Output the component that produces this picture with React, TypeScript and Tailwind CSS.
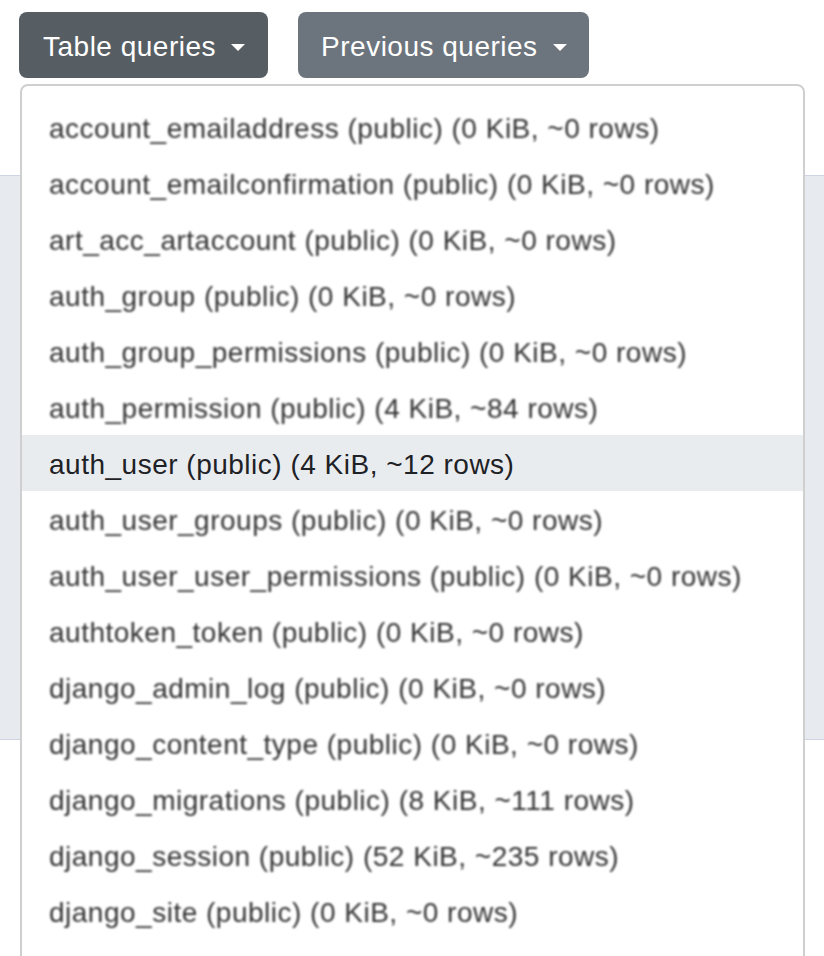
import { useState } from "react";

const tables = [
    "account_emailaddress (public) (0 KiB, ~0 rows)",
    "account_emailconfirmation (public) (0 KiB, ~0 rows)",
    "art_acc_artaccount (public) (0 KiB, ~0 rows)",
    "auth_group (public) (0 KiB, ~0 rows)",
    "auth_group_permissions (public) (0 KiB, ~0 rows)",
    "auth_permission (public) (4 KiB, ~84 rows)",
    "auth_user (public) (4 KiB, ~12 rows)",
    "auth_user_groups (public) (0 KiB, ~0 rows)",
    "auth_user_user_permissions (public) (0 KiB, ~0 rows)",
    "authtoken_token (public) (0 KiB, ~0 rows)",
    "django_admin_log (public) (0 KiB, ~0 rows)",
    "django_content_type (public) (0 KiB, ~0 rows)",
    "django_migrations (public) (8 KiB, ~111 rows)",
    "django_session (public) (52 KiB, ~235 rows)",
    "django_site (public) (0 KiB, ~0 rows)",
];

function Caret() {
    return <span className="ml-[15px] inline-block h-0 w-0 border-x-[7px] border-t-[7px] border-x-transparent border-t-white" />;
}

export default function App() {
    const [active, setActive] = useState(6);

    return (
        <div className="relative h-[956px] overflow-hidden bg-white font-['Liberation_Sans',Arial,sans-serif] text-[28px] leading-[1.5] tracking-[0.5px] text-[#212529]">
            <div className="flex gap-[30px] px-[19px] pt-[12px]">
                <button className="flex h-[66px] items-center rounded-[8px] bg-[#565e64] pl-[24px] pr-[23px] pt-[4px] text-white">
                    Table queries
                    <Caret />
                </button>
                <button className="flex h-[66px] items-center rounded-[8px] bg-[#6c757d] pl-[23px] pr-[22px] pt-[4px] text-white">
                    Previous queries
                    <Caret />
                </button>
            </div>

            {/* page content behind the open menu */}
            <div className="mt-[97px] h-[565px] border-y border-[#cdd4e2] bg-[#e7ebf0]" />

            <div className="absolute left-[20px] top-[84px] w-[785px] rounded-[8px] border-2 border-[#cfcfcf] bg-white pt-[13px] pb-[40px]">
                {tables.map((t, i) => (
                    <div
                        key={t}
                        onMouseEnter={() => setActive(i)}
                        className={`h-[56px] whitespace-nowrap px-[27px] pt-[9px] ${i === active ? "bg-[#e9ecef] text-[#1e2125]" : "text-[#333] blur-[0.9px]"}`}
                    >
                        {t}
                    </div>
                ))}
            </div>
        </div>
    );
}
